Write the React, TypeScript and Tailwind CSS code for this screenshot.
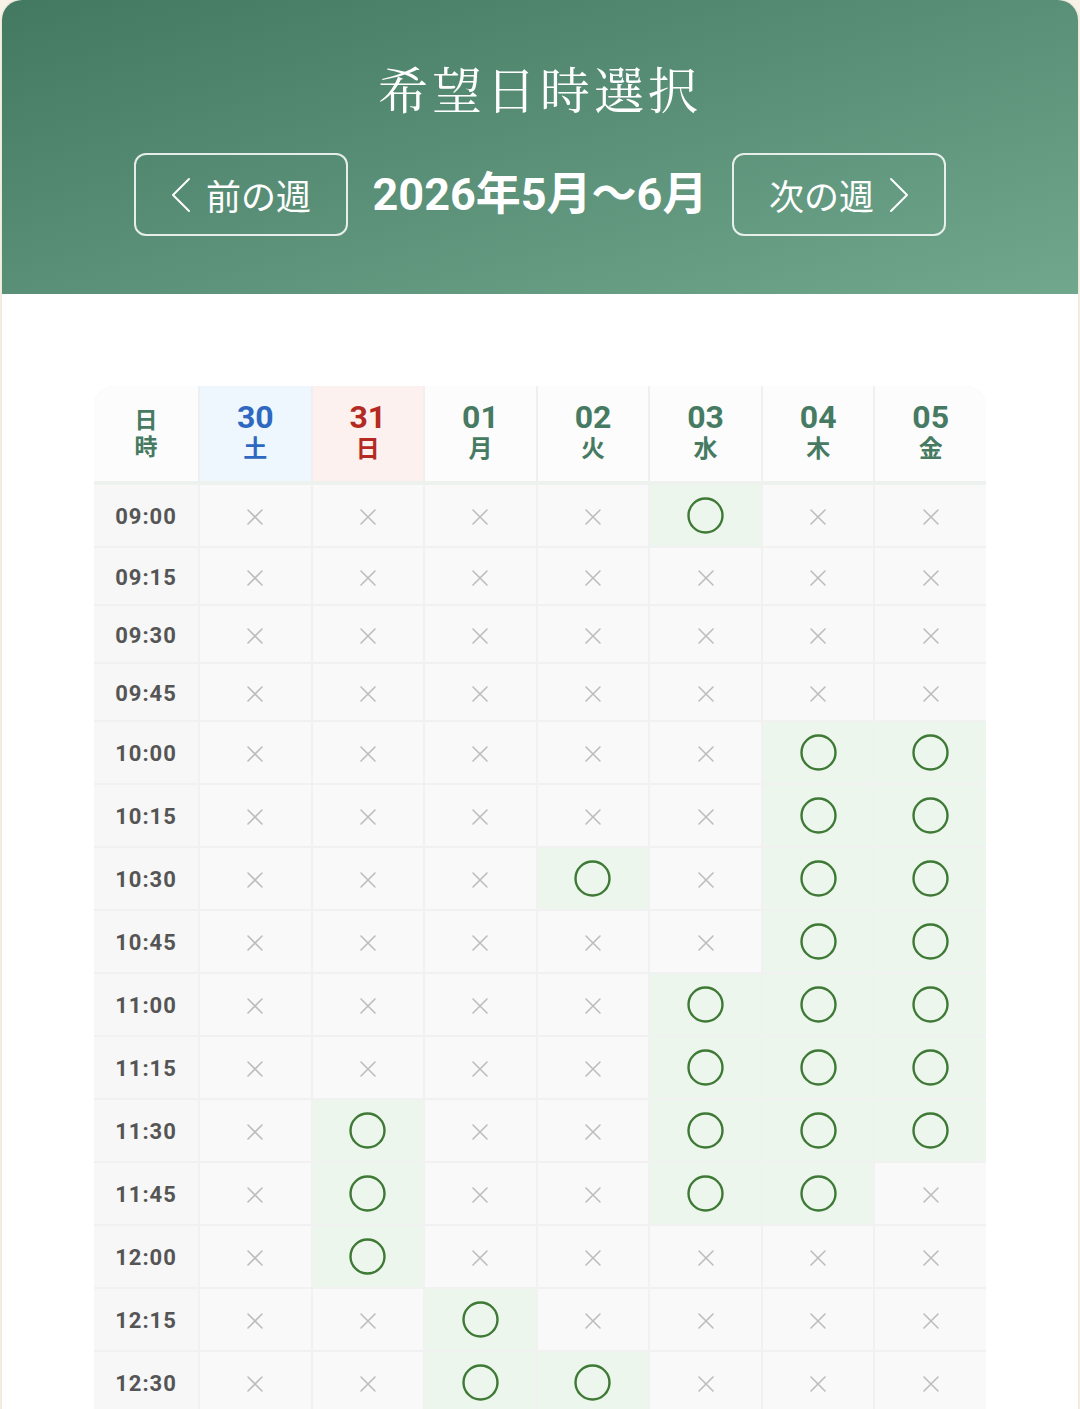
/**
 * Preferred date/time picker: a green header with week navigation and a
 * weekly availability grid (○ = open slot, × = unavailable).
 */

type Day = {
  date: string;
  weekday: string;
  kind: "sat" | "sun" | "weekday";
};

const days: Day[] = [
  { date: "30", weekday: "土", kind: "sat" },
  { date: "31", weekday: "日", kind: "sun" },
  { date: "01", weekday: "月", kind: "weekday" },
  { date: "02", weekday: "火", kind: "weekday" },
  { date: "03", weekday: "水", kind: "weekday" },
  { date: "04", weekday: "木", kind: "weekday" },
  { date: "05", weekday: "金", kind: "weekday" },
];

// column indices that are open for each time slot
const slots: { time: string; open: number[] }[] = [
  { time: "09:00", open: [4] },
  { time: "09:15", open: [] },
  { time: "09:30", open: [] },
  { time: "09:45", open: [] },
  { time: "10:00", open: [5, 6] },
  { time: "10:15", open: [5, 6] },
  { time: "10:30", open: [3, 5, 6] },
  { time: "10:45", open: [5, 6] },
  { time: "11:00", open: [4, 5, 6] },
  { time: "11:15", open: [4, 5, 6] },
  { time: "11:30", open: [1, 4, 5, 6] },
  { time: "11:45", open: [1, 4, 5] },
  { time: "12:00", open: [1] },
  { time: "12:15", open: [2] },
  { time: "12:30", open: [2, 3] },
];

const FONT = "font-['Roboto','Noto_Sans_CJK_JP',sans-serif]";

function headerCellClass(kind: Day["kind"]) {
  if (kind === "sat") return "bg-[#eef7fe] text-[#2f68c0]";
  if (kind === "sun") return "bg-[#fdf1f0] text-[#b42a22]";
  return "bg-[#fcfcfc] text-[#467a62]";
}

function OpenMark() {
  return (
    <svg width="37" height="37" viewBox="0 0 37 37" className="block">
      <circle cx="18.5" cy="18.5" r="17" fill="none" stroke="#3e7a36" strokeWidth="2.4" />
    </svg>
  );
}

function ClosedMark() {
  return (
    <div className="h-[32px] flex items-center justify-center pt-[3px]">
      <svg width="18" height="18" viewBox="0 0 18 18" className="block">
        <path d="M2 2 L16 16 M16 2 L2 16" stroke="#bdbdbd" strokeWidth="1.6" strokeLinecap="round" />
      </svg>
    </div>
  );
}

function Chevron({ dir }: { dir: "left" | "right" }) {
  return (
    <svg width="22" height="36" viewBox="0 0 22 36" className="block">
      <path
        d={dir === "left" ? "M19 2 L3 18 L19 34" : "M3 2 L19 18 L3 34"}
        fill="none"
        stroke="white"
        strokeWidth="2"
        strokeLinejoin="round"
        strokeLinecap="round"
      />
    </svg>
  );
}

export default function App() {
  return (
    <div className={`h-[1409px] overflow-hidden bg-[#f8f3e6] ${FONT}`}>
      <div className="mx-[2px] rounded-t-[20px] overflow-hidden bg-white shadow-[0_0_3px_rgba(0,0,0,0.12)] min-h-[1409px]">
        {/* header */}
        <div className="h-[294px] bg-gradient-to-br from-[#437961] to-[#70a78d] flex flex-col items-center">
          <h1 className="mt-[62px] text-white text-[50px] leading-[50px] font-normal tracking-[4px] font-['Noto_Serif_CJK_JP','Noto_Sans_CJK_JP',serif]">
            希望日時選択
          </h1>
          <div className="mt-[41px] flex items-center gap-[25px]">
            <button className="w-[214px] h-[83px] rounded-[12px] border-2 border-white/85 flex items-center justify-center gap-[14px] text-white text-[35px] font-normal font-['Noto_Sans_CJK_JP',sans-serif]">
              <Chevron dir="left" />
              <span className="leading-none">前の週</span>
            </button>
            <div className="text-white text-[45px] font-bold leading-none">
              2026年5月〜6月
            </div>
            <button className="w-[214px] h-[83px] rounded-[12px] border-2 border-white/85 flex items-center justify-center gap-[14px] text-white text-[35px] font-normal font-['Noto_Sans_CJK_JP',sans-serif]">
              <span className="leading-none">次の週</span>
              <Chevron dir="right" />
            </button>
          </div>
        </div>

        {/* schedule table */}
        <div className="pt-[92px] px-[92px]">
          <div className="rounded-t-[20px] overflow-hidden">
            <div className="grid grid-cols-[104px_repeat(7,1fr)] gap-x-[2px] bg-[#efefef] border-b-4 border-[#edf2ee]">
              <div className="h-[95px] bg-[#fcfcfc] flex flex-col items-center justify-center text-[#467a62] text-[23px] font-bold leading-[27px]">
                <span>日</span>
                <span>時</span>
              </div>
              {days.map((d) => (
                <div
                  key={d.date}
                  className={`h-[95px] flex flex-col items-center justify-center gap-[2px] pb-[2px] ${headerCellClass(d.kind)}`}
                >
                  <span className="text-[32px] font-bold leading-[30px]">{d.date}</span>
                  <span className="text-[24px] font-bold leading-[30px]">{d.weekday}</span>
                </div>
              ))}
            </div>
            <div className="grid grid-cols-[104px_repeat(7,1fr)] gap-[2px] bg-[#f1f1f1]">
              {slots.map((s) => (
                <div key={s.time} className="contents">
                  <div className="bg-[#f7f7f7] flex items-center justify-center pt-[2px] text-[22px] font-bold text-[#555555] tracking-[1px]">
                    {s.time}
                  </div>
                  {days.map((d, i) => {
                    const open = s.open.includes(i);
                    return (
                      <div
                        key={d.date}
                        className={`py-[12px] flex items-center justify-center ${open ? "bg-[#edf6ec]" : "bg-[#f9f9f9]"}`}
                      >
                        {open ? <OpenMark /> : <ClosedMark />}
                      </div>
                    );
                  })}
                </div>
              ))}
            </div>
          </div>
        </div>
      </div>
    </div>
  );
}
